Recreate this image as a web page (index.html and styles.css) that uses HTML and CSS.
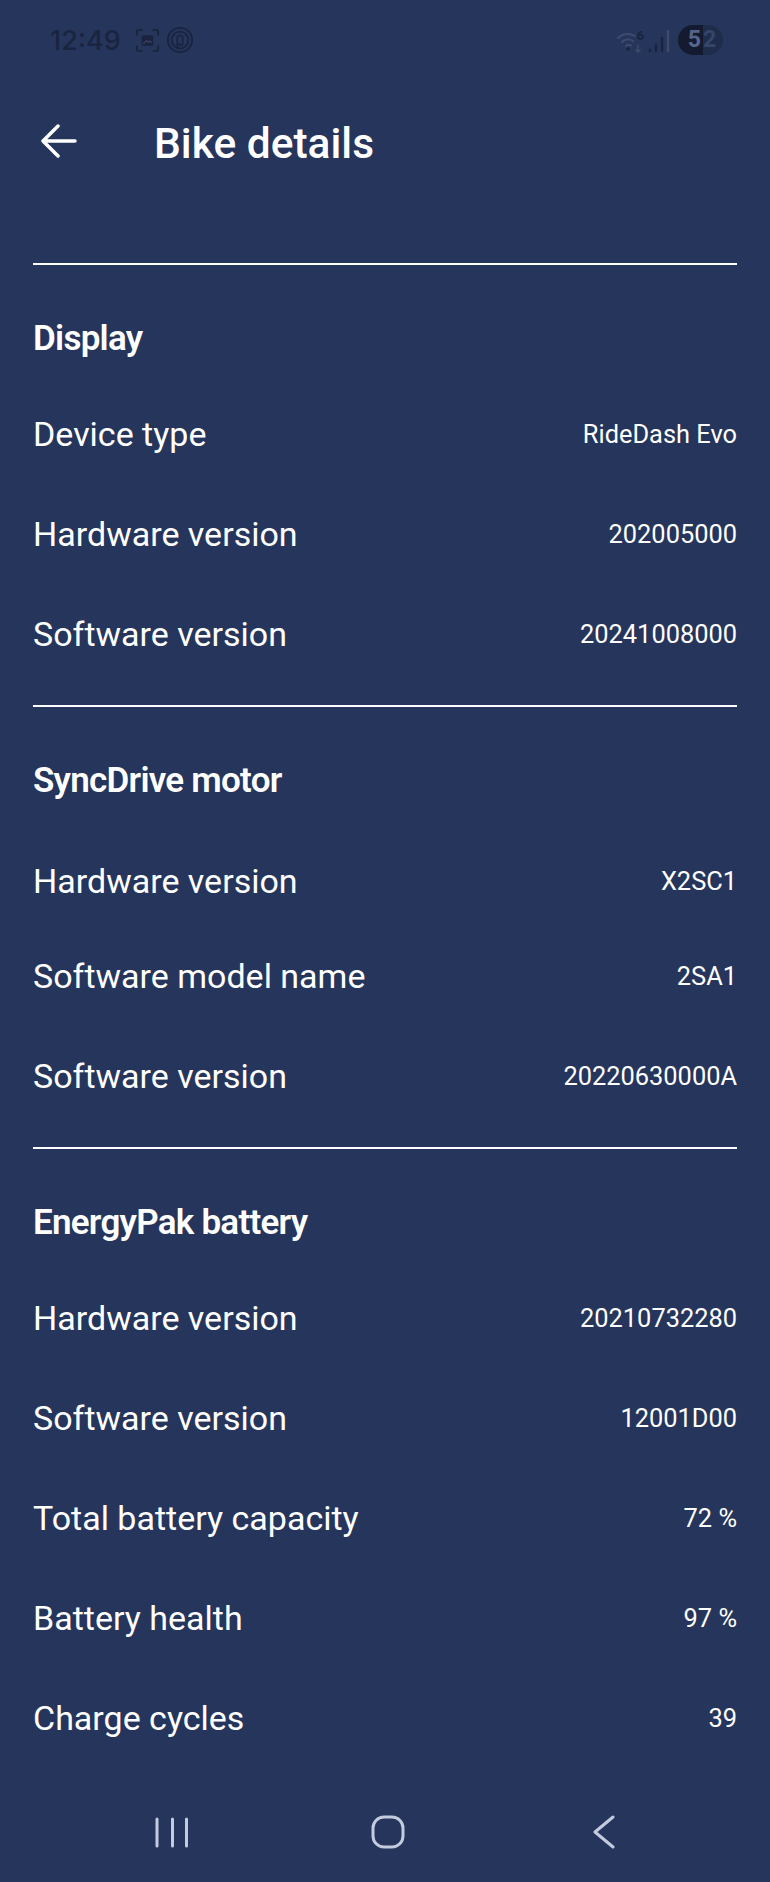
FILE: index.html
```html
<!DOCTYPE html>
<html lang="en">
<head>
<meta charset="utf-8">
<title>Bike details</title>
<link rel="stylesheet" href="styles.css">
</head>
<body>
<div class="screen">
  <div class="status">
    <div class="status-left">
      <span class="clock">12:49</span>
      <svg class="ic-shot" width="27" height="27" viewBox="0 0 28 28" fill="none" stroke="#1a2440" stroke-width="2" stroke-linecap="round">
        <path d="M3 8V5a2 2 0 0 1 2-2h3M20 3h3a2 2 0 0 1 2 2v3M25 20v3a2 2 0 0 1-2 2h-3M8 25H5a2 2 0 0 1-2-2v-3"/>
        <rect x="8" y="8.5" width="12" height="11" rx="2" fill="#1a2440" stroke="none"/>
        <path d="M10 17l3-3 2 2 1.5-1.5L18 16" stroke="#3a4666" stroke-width="1.2"/>
      </svg>
      <svg class="ic-thread" width="28" height="28" viewBox="0 0 30 30" fill="none" stroke="#1a2440" stroke-width="2">
        <circle cx="15" cy="15" r="13"/>
        <circle cx="15" cy="15" r="9"/>
        <path d="M12 24V13a3 3 0 0 1 6 0v5a2.5 2.5 0 0 1-5 0" stroke-width="1.8"/>
      </svg>
    </div>
    <div class="status-right">
      <svg class="ic-wifi" width="28" height="26" viewBox="0 0 28 26" fill="none" stroke="#3f4b6c" stroke-width="2" stroke-linecap="round">
        <path d="M1 11a14 14 0 0 1 17-2M5 15a9 9 0 0 1 11-1M9 19a4 4 0 0 1 5-.5"/>
        <circle cx="11" cy="22" r="1.8" fill="#1a2440" stroke="none"/>
        <path d="M21 18v7M19 23l2 2 2-2" stroke="#3f4b6c" stroke-width="1.5"/>
      </svg>
      <span class="wifi6">6</span>
      <svg class="ic-signal" width="22" height="26" viewBox="0 0 22 26" fill="none" stroke-width="2.4" stroke-linecap="round">
        <path d="M2 24v-1" stroke="#1a2440"/>
        <path d="M8 24v-6" stroke="#1a2440"/>
        <path d="M14 24V11" stroke="#1a2440"/>
        <path d="M20 24V4" stroke="#3f4b6c"/>
      </svg>
      <div class="battery"><span class="batt-a">5</span><span class="batt-b">2</span></div>
    </div>
  </div>

  <header class="app-bar">
    <svg class="back" width="36" height="34" viewBox="0 0 36 34" fill="none" stroke="#fff" stroke-width="3.5" stroke-linecap="round" stroke-linejoin="round">
      <path d="M34 17H2M17 2L2 17l15 15"/>
    </svg>
    <h1 class="title">Bike details</h1>
  </header>

  <section class="group">
    <h2 class="group-title">Display</h2>
    <div class="row"><span class="label">Device type</span><span class="value">RideDash Evo</span></div>
    <div class="row"><span class="label">Hardware version</span><span class="value">202005000</span></div>
    <div class="row"><span class="label">Software version</span><span class="value">20241008000</span></div>
  </section>

  <section class="group">
    <h2 class="group-title group-title-wide">SyncDrive motor</h2>
    <div class="row"><span class="label">Hardware version</span><span class="value">X2SC1</span></div>
    <div class="row row-tight"><span class="label">Software model name</span><span class="value">2SA1</span></div>
    <div class="row"><span class="label">Software version</span><span class="value">20220630000A</span></div>
  </section>

  <section class="group group-last">
    <h2 class="group-title">EnergyPak battery</h2>
    <div class="row"><span class="label">Hardware version</span><span class="value">20210732280</span></div>
    <div class="row"><span class="label">Software version</span><span class="value">12001D00</span></div>
    <div class="row"><span class="label">Total battery capacity</span><span class="value">72 %</span></div>
    <div class="row"><span class="label">Battery health</span><span class="value">97 %</span></div>
    <div class="row"><span class="label">Charge cycles</span><span class="value">39</span></div>
  </section>

  <nav class="nav">
    <svg class="nav-recent" width="34" height="31" viewBox="0 0 34 31" fill="none" stroke="#c3cbdf" stroke-width="3" stroke-linecap="round">
      <path d="M2 2v27M17.5 2v27M31.5 2v27"/>
    </svg>
    <svg class="nav-home" width="34" height="34" viewBox="0 0 34 34" fill="none" stroke="#c3cbdf" stroke-width="3">
      <rect x="2" y="2" width="30" height="30" rx="11"/>
    </svg>
    <svg class="nav-back" width="22" height="34" viewBox="0 0 22 34" fill="none" stroke="#c3cbdf" stroke-width="3" stroke-linecap="round" stroke-linejoin="round">
      <path d="M20 2L2 17l18 15"/>
    </svg>
  </nav>
</div>
</body>
</html>
```

FILE: styles.css
```css
html, body {
  margin: 0;
  padding: 0;
  background: #26355b;
}

.screen {
  width: 770px;
  height: 1882px;
  overflow: hidden;
  background: #26355b;
  color: #fff;
  font-family: Roboto, "Liberation Sans", sans-serif;
  display: flex;
  flex-direction: column;
}

.status {
  flex: none;
  height: 80px;
  padding: 0 47px 0 50px;
  display: flex;
  align-items: center;
  justify-content: space-between;
  box-sizing: border-box;
}

.status-left,
.status-right {
  display: flex;
  align-items: center;
}

.clock {
  font-size: 27px;
  font-weight: 500;
  color: #1a2440;
  font-family: Inter, Roboto, sans-serif;
}

.ic-shot { margin-left: 13px; }
.ic-thread { margin-left: 5px; }

.wifi6 {
  font-size: 13px;
  font-weight: 700;
  color: #1a2440;
  margin: -10px 0 0 -8px;
}

.ic-signal { margin-left: 4px; }

.battery {
  margin-left: 8px;
  width: 45px;
  height: 30px;
  border-radius: 15px;
  overflow: hidden;
  display: flex;
  font-size: 23px;
  font-weight: 700;
  line-height: 30px;
}

.batt-a {
  flex: 0 0 25px;
  background: #141b30;
  color: #56658c;
  padding-right: 2px;
  box-sizing: border-box;
  text-align: right;
}

.batt-b {
  flex: 1;
  background: #1f2c4b;
  color: #36456a;
}

.app-bar {
  flex: none;
  height: 183px;
  padding: 0 0 58px 41px;
  box-sizing: border-box;
  display: flex;
  align-items: center;
}

.back {
  flex: none;
  margin-bottom: 4px;
}

.title {
  margin: 2px 0 0 77px;
  font-size: 42.5px;
  line-height: 48px;
  font-weight: 500;
}

.group {
  flex: none;
  margin: 0 33px;
  border-top: 2px solid #fff;
  padding: 50px 0 21px;
}

.group-last { padding-bottom: 0; }

.group-title {
  margin: 0 0 21px;
  font-size: 35px;
  line-height: 48px;
  font-weight: 600;
  letter-spacing: -0.75px;
}

.group-title-wide { margin-bottom: 26px; }

.row {
  height: 100px;
  display: flex;
  align-items: center;
  justify-content: space-between;
}

.row-tight { margin-top: -5px; }

.label {
  font-size: 34px;
  font-weight: 400;
}

.value {
  font-size: 25.4px;
  font-weight: 400;
}

.nav {
  flex: none;
  margin-top: auto;
  height: 100px;
  display: flex;
  align-items: center;
  padding-left: 155px;
  box-sizing: border-box;
}

.nav-home { margin-left: 182px; }
.nav-back { margin-left: 188px; }
```
